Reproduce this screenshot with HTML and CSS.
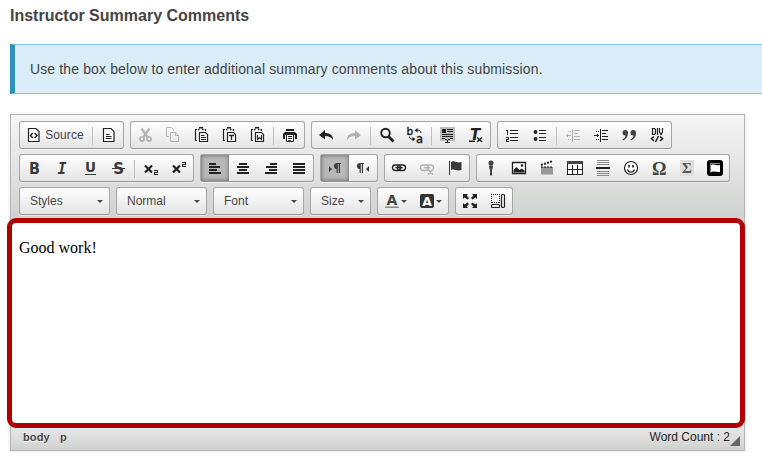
FILE: index.html
```html
<!DOCTYPE html>
<html lang="en">
<head>
<meta charset="utf-8">
<title>Instructor Summary Comments</title>
<link rel="stylesheet" href="styles.css">
</head>
<body>
<h1 class="title">Instructor Summary Comments</h1>
<p class="notice">Use the box below to enter additional summary comments about this submission.</p>
<div class="editor">
  <div class="toolbar">
    <div class="row">
      <div class="group">
        <span class="btn source"><svg class="line" viewBox="0 0 16 16"><path d="M2.500 1.500h7.500l3 3v10h-10.500z" fill="#fff" stroke-width="1.200"/><path d="M6.800 6 4.500 8.500l2.300 2.500M8.700 6 11 8.500 8.700 11" stroke-width="1.500"/></svg>Source</span>
        <i class="sep"></i>
        <span class="btn"><svg class="line" viewBox="0 0 16 16"><path d="M2.500 1.500h7.500l3 3v10h-10.500z" fill="#fff" stroke-width="1.200"/><path d="M5 7.500h3.500M5 9.500h5.500M5 11.500h5.500"/></svg></span>
      </div>
      <div class="group">
        <span class="btn off"><svg class="line" viewBox="0 0 16 16"><path d="M4.500 1.500 10.500 10M12.500 1.500 6.500 10" stroke-width="2.200"/><circle cx="5" cy="12" r="2" stroke-width="1.700"/><circle cx="12" cy="12" r="2" stroke-width="1.700"/></svg></span>
        <span class="btn off"><svg class="line" viewBox="0 0 16 16"><path d="M4 9.500H1.500v-9h5l2 2V4M5.500 5.500h5l3 3v6h-8zM10.500 5.500v3h3"/></svg></span>
        <span class="btn"><svg class="line" viewBox="0 0 16 16"><path d="M4 2.500H2.500v11H4M11.500 2.500h1V4" stroke-width="1.200"/><path d="M5 2.500h1.500M9 2.500h1.500M6 .8h4" stroke-width="1.500"/><path d="M6.500 5.500h6l2 2v7h-8z" fill="#fff" stroke-width="1.200"/><path d="M8 8.500h3.500M8 10.500h5M8 12.500h5"/></svg></span>
        <span class="btn"><svg class="line" viewBox="0 0 16 16"><path d="M4 2.500H2.500v11H4M11.500 2.500h1V4" stroke-width="1.200"/><path d="M5 2.500h1.500M9 2.500h1.500M6 .8h4" stroke-width="1.500"/><path d="M6.500 5.500h6l2 2v7h-8z" fill="#fff" stroke-width="1.200"/><path d="M8 8.500h5M10.500 8.500V13" stroke-width="1.300"/></svg></span>
        <span class="btn"><svg class="line" viewBox="0 0 16 16"><path d="M4 2.500H2.500v11H4M11.500 2.500h1V4" stroke-width="1.200"/><path d="M5 2.500h1.500M9 2.500h1.500M6 .8h4" stroke-width="1.500"/><path d="M6.500 5.500h6l2 2v7h-8z" fill="#fff" stroke-width="1.200"/><path d="M8.500 8v4.500l2-2 2 2V8" stroke-width="1.200"/></svg></span>
        <i class="sep"></i>
        <span class="btn"><svg viewBox="0 0 16 16"><path d="M4 2h8v2H4zM3 5h10l2 2v5h-2V8H3v4H1V7z"/><path d="M4.500 7.500h7v7h-7z" fill="#fff" stroke="#222"/><path d="M6 9h4v1H6zM6 11h4v1H6zM6 13h3v.8H6z"/></svg></span>
      </div>
      <div class="group">
        <span class="btn"><svg viewBox="0 0 16 16"><path d="M1 8l6-5v3c5 0 8 2 8 7-2-3-4-4-8-4v3.500z"/></svg></span>
        <span class="btn off"><svg viewBox="0 0 16 16"><path d="M15 8 9 3v3c-5 0-8 2-8 7 2-3 4-4 8-4v3.500z"/></svg></span>
        <i class="sep"></i>
        <span class="btn"><svg class="line" viewBox="0 0 16 16"><circle cx="6.500" cy="6" r="4.300" stroke-width="1.900"/><path d="M9.500 9.500l5 5" stroke-width="2.800"/></svg></span>
        <span class="btn"><svg viewBox="0 0 16 16"><text x="-.5" y="8" font-size="10.500" class="sans">b</text><text x="9" y="15.500" font-size="11.500" class="sans">a</text><path class="hair" d="M9 3.500c3-1 5 0 5 2.500M2.500 9.500c0 2.500 2 3 4 2.500"/><path d="M7.500 3.500l3-2.500v4.500zM8.500 12l-3-2v4.500z"/></svg></span>
        <i class="sep"></i>
        <span class="btn"><svg class="crisp" viewBox="0 0 16 16"><path fill="#bbb" d="M0 0h15v14H0z"/><path d="M2 2h4v4H2zM7 2h6v1H7zM7 4h6v1H7zM2 7h11v1H2zM2 9h11v1H2zM2 11h3v1H2zM10 11h3v1h-3zM5 12h2v1H5zM8 12h2v1H8zM7 13h1v2H7zM5 15h5v1H5z"/></svg></span>
        <span class="btn"><svg viewBox="0 0 16 16"><text x="2" y="13" font-size="15" font-style="italic">T</text><path d="M1 13.500h6V15H1z"/><path class="hair" d="M9 10.500l5 4.500M14 10.500l-5 4.500" stroke="#f5f5f5" stroke-width="4"/><path class="hair" d="M9 10.500l5 4.500M14 10.500l-5 4.500" stroke-width="1.500"/></svg></span>
      </div>
      <div class="group">
        <span class="btn"><svg class="crisp" viewBox="0 0 16 16"><path d="M2 3h2v5H3V4H2zM2 10h3v3H3v1h2v1H2v-3h2v-1H2zM6 3h8v1H6zM6 6h8v1H6zM6 10h8v1H6zM6 13h8v1H6z"/></svg></span>
        <span class="btn"><svg viewBox="0 0 16 16"><circle cx="3.500" cy="5" r="1.900"/><circle cx="3.500" cy="12" r="1.900"/><path d="M7 3h7v1H7zM7 6h7v1H7zM7 10h7v1H7zM7 13h7v1H7z"/></svg></span>
        <i class="sep"></i>
        <span class="btn off"><svg class="crisp" viewBox="0 0 16 16"><path d="M7 2h1v13H7zM9 3h6v1H9zM9 6h4v1H9zM9 9h6v1H9zM9 12h6v1H9zM3 4h1v1H3zM5 4h1v1H5zM3 12h1v1H3zM5 12h1v1H5zM1 8h5v1H1zM2 7h1v3H2z"/></svg></span>
        <span class="btn"><svg class="crisp" viewBox="0 0 16 16"><path d="M7 2h1v13H7zM9 3h6v1H9zM9 6h4v1H9zM9 9h6v1H9zM9 12h6v1H9zM3 4h1v1H3zM5 4h1v1H5zM3 12h1v1H3zM5 12h1v1H5zM1 8h5v1H1zM4 7h1v3H4z"/></svg></span>
        <span class="btn"><svg viewBox="0 0 16 16"><path d="M4 3a2.700 2.700 0 0 1 3 3c0 4-2 6-5 7.500l-.5-1C3.500 11 4.500 10 4.500 8.500A2.700 2.700 0 1 1 4 3zM12 3a2.700 2.700 0 0 1 3 3c0 4-2 6-5 7.500l-.5-1c2-1.500 3-2.500 3-4A2.700 2.700 0 1 1 12 3z" fill="#444"/></svg></span>
        <span class="btn"><svg class="line" viewBox="0 0 16 16"><path d="M3.500 1.500v6h2l1-1v-4l-1-1zM8.500 1v7M10.500 1v4l1.500 2.500L13.500 5V1" stroke-width="1.200"/><path d="M5 9.500l-2.500 2L5 14M11 9.500l2.500 2L11 14M9.500 9l-3 6" stroke-width="1.600"/></svg></span>
      </div>
    </div>
    <div class="row">
      <div class="group">
        <span class="btn"><svg class="soft" viewBox="0 0 16 16"><text x="3" y="13.500" font-size="15" textLength="11" lengthAdjust="spacingAndGlyphs">B</text></svg></span>
        <span class="btn"><svg class="soft" viewBox="0 0 16 16"><text x="3.500" y="13.500" font-size="15" font-style="italic" class="mono">I</text></svg></span>
        <span class="btn"><svg class="soft" viewBox="0 0 16 16"><text x="3" y="12" font-size="13.500">U</text><path d="M3 14h11v1H3z"/></svg></span>
        <span class="btn"><svg class="soft" viewBox="0 0 16 16"><text x="3.200" y="13.500" font-size="15">S</text><path d="M2 8h13v1H2z"/></svg></span>
        <i class="sep"></i>
        <span class="btn"><svg viewBox="0 0 16 16"><path class="hair" d="M2 5.500l7 7M9 5.500l-7 7" stroke-width="2.200"/><path d="M11 10h4v3h-3v1h3v1h-4v-3h3v-1h-3z"/></svg></span>
        <span class="btn"><svg viewBox="0 0 16 16"><path class="hair" d="M2 5.500l7 7M9 5.500l-7 7" stroke-width="2.200"/><path d="M11 2h4v3h-3v1h3v1h-4V4h3V3h-3z"/></svg></span>
      </div>
      <div class="group">
        <span class="btn on"><svg class="crisp" viewBox="0 0 16 16"><path d="M2 3h7v2H2zM2 6h11v2H2zM2 9h8v2H2zM2 12h12v2H2z"/></svg></span>
        <span class="btn"><svg class="crisp" viewBox="0 0 16 16"><path d="M4 3h8v2H4zM2 6h12v2H2zM4 9h8v2H4zM2 12h12v2H2z"/></svg></span>
        <span class="btn"><svg class="crisp" viewBox="0 0 16 16"><path d="M7 3h7v2H7zM3 6h11v2H3zM6 9h8v2H6zM2 12h12v2H2z"/></svg></span>
        <span class="btn"><svg class="crisp" viewBox="0 0 16 16"><path d="M2 3h12v2H2zM2 6h12v2H2zM2 9h12v2H2zM2 12h12v2H2z"/></svg></span>
      </div>
      <div class="group">
        <span class="btn on"><svg class="soft" viewBox="0 0 16 16"><path d="M2 6l3 3-3 3zM14 3v1h-1v9h-1.200V4h-1v9H9.600V9C6 9 6 3 10 3z"/></svg></span>
        <span class="btn"><svg class="soft" viewBox="0 0 16 16"><path d="M14 6l-3 3 3 3zM9 3v1H8v9H6.800V4h-1v9H4.600V9C1 9 1 3 5 3z"/></svg></span>
      </div>
      <div class="group">
        <span class="btn"><svg class="line" viewBox="0 0 16 16"><rect x="1.500" y="5" width="8" height="5.500" rx="2.700" stroke-width="1.300"/><rect x="6.500" y="5" width="8" height="5.500" rx="2.700" stroke-width="1.300"/><path d="M4.500 7.700h7" stroke-width="1.400"/></svg></span>
        <span class="btn off"><svg class="line" viewBox="0 0 16 16"><rect x="1.500" y="5" width="8" height="5.500" rx="2.700" stroke-width="1.400"/><path d="M8 5h4a2.500 2.500 0 0 1 2 4M5 7.700h6M9 9.500l5 5M14 9.500l-5 5" stroke-width="1.500"/></svg></span>
        <span class="btn"><svg class="soft" viewBox="0 0 16 16"><path d="M2 1h1v14H2zM4 2c3-2 5 1.500 10.500 0v8c-5 1.500-7-1.500-10.500 0z"/></svg></span>
      </div>
      <div class="group">
        <span class="btn"><svg viewBox="0 0 16 16"><circle cx="8" cy="3" r="2.500" fill="#444"/><path d="M6 5.500h4v1.500L9 10v5.500H7V10L6 7z" fill="#444"/></svg></span>
        <span class="btn"><svg viewBox="0 0 16 16"><path d="M1.500 2.500h13v11h-13z" fill="#fff" stroke="#222" stroke-width="1.300"/><path d="M2.500 12.500V10l3-3 3 3 2-1.500 3 2v2z"/><circle cx="11" cy="5.500" r="1.300"/></svg></span>
        <span class="btn"><svg viewBox="0 0 16 16"><path d="M2 7h12v7.500H2z" fill="#999"/><path d="M2 5l12-4" class="hair" stroke-width="2" stroke-dasharray="2 1.200"/><path d="M2 7.200h12" class="hair" stroke-width="1.200" stroke-dasharray="2 1"/></svg></span>
        <span class="btn"><svg class="crisp" viewBox="0 0 16 16"><path fill="#fff" d="M1 4h14v10H1z"/><path fill="#444" d="M0 1h16v3H0z"/><path d="M0 4h1v11H0zM15 4h1v11h-1zM5 5h1v9H5zM10 5h1v9h-1zM1 9h14v1H1zM0 14h16v1H0z"/></svg></span>
        <span class="btn"><svg class="crisp" viewBox="0 0 16 16"><path fill="#888" d="M2 0h12v1H2zM2 2h12v1H2zM2 4h12v1H2zM2 11h12v1H2zM2 13h12v1H2zM2 15h12v1H2z"/><path d="M1 7h14v2H1z"/></svg></span>
        <span class="btn"><svg class="line" viewBox="0 0 16 16"><circle cx="8" cy="8" r="6.500" stroke-width="1.200" fill="#fff"/><path d="M4.500 9.500c1 3.500 6 3.500 7 0" stroke-width="1.200"/><path d="M6 5v2.500M10 5v2.500" stroke-width="1.600"/></svg></span>
        <span class="btn"><svg viewBox="0 0 16 16"><text x="1" y="14.500" font-size="18" class="serif" fill="#444">Ω</text></svg></span>
        <span class="btn"><svg viewBox="0 0 16 16"><path d="M1 0h14v16H1z" fill="#ddd"/><text x="3" y="13" font-size="15" class="serif" fill="#555">Σ</text></svg></span>
        <span class="btn"><svg viewBox="0 0 16 16"><rect width="16" height="16" rx="3" fill="#000"/><path d="M3.500 12.500V3.500h9.500" stroke="#888" fill="none"/><path d="M4 5c3-1.500 4 1 9 0v7c-3 .5-6-1.500-9 0z" fill="#fff"/></svg></span>
      </div>
    </div>
    <div class="row">
      <div class="group combo">Styles<b class="arrow"></b></div>
      <div class="group combo">Normal<b class="arrow"></b></div>
      <div class="group combo">Font<b class="arrow"></b></div>
      <div class="group combo small">Size<b class="arrow"></b></div>
      <div class="group">
        <span class="btn color"><svg viewBox="0 0 16 16"><text x="2.500" y="12" font-size="14" fill="#444">A</text><path d="M1 13.500h14V15H1z" fill="#888"/></svg><b class="arrow"></b></span>
        <span class="btn color"><svg viewBox="0 0 16 16"><rect x="1" y="1" width="14" height="14" rx="2" fill="#333"/><text x="3.200" y="12.500" font-size="12.500" fill="#fff">A</text></svg><b class="arrow"></b></span>
      </div>
      <div class="group">
        <span class="btn"><svg viewBox="0 0 16 16"><path d="M1 1h5L4.600 2.500 7 5 5.500 6.500 2.500 4.600 1 6zM15 1v5l-1.500-1.400L10.500 6.500 9 5l2.400-2.500L10 1zM1 15v-5l1.500 1.400L5.500 9.500 7 11l-2.400 2.500L6 15zM15 15h-5l1.400-1.500L9 11l1.500-1.500 3 1.900L15 10z"/></svg></span>
        <span class="btn"><svg class="line" viewBox="0 0 16 16"><path d="M1.500 10V1.500H9.500V10M1.500 9.500H10" stroke-dasharray="1 1" class="crisp"/><rect x="11.500" y="1.500" width="3" height="13" rx="1" stroke-width="1.200"/><rect x="1.500" y="11.500" width="8" height="3" rx="1" stroke-width="1.200"/></svg></span>
      </div>
    </div>
  </div>
  <div class="content"><p>Good work!</p></div>
  <div class="status"><span class="path">body</span><span class="path">p</span><span class="count">Word Count : 2</span><i class="grip"></i></div>
  <div class="highlight"></div>
</div>
</body>
</html>
```
FILE: styles.css
```css
* { box-sizing: border-box; }
body {
  margin: 0;
  padding: 6px 0 0 10px;
  height: 459px;
  overflow: hidden;
  background: #fff;
  color: #444;
  font-family: "Liberation Sans", Arial, sans-serif;
}
.title { margin: 0; font-size: 16px; line-height: 20px; font-weight: bold; color: #444; }
.notice {
  margin: 18px 0 0;
  height: 50px;
  padding-left: 15px;
  border: solid #81c7e6;
  border-width: 1px 0;
  border-left: 5px solid #2b92c2;
  background: #daedf8;
  font-size: 14px;
  line-height: 49px;
  letter-spacing: .13px;
}
.editor {
  position: relative;
  width: 735px;
  height: 337px;
  margin-top: 20px;
  border: 1px solid #b6b6b6;
  display: flex;
  flex-direction: column;
  box-shadow: 0 0 3px rgba(0, 0, 0, .15);
}
.toolbar {
  height: 106px;
  padding: 6px 8px 0;
  background: linear-gradient(#f5f5f5, #cfd1cf);
}
.row { display: flex; gap: 6px; margin-bottom: 5px; }
.group {
  display: flex;
  height: 28px;
  border: 1px solid #a6a6a6;
  border-bottom-color: #979797;
  border-radius: 3px;
  background: linear-gradient(#fff, #e4e4e4);
  box-shadow: 0 1px 0 rgba(255, 255, 255, .5);
}
.btn { display: flex; align-items: center; justify-content: center; width: 28px; height: 26px; }
.btn.source { width: 70px; gap: 3px; font-size: 12px; letter-spacing: .1px; color: #474747; }
.btn.color { width: 35px; gap: 1px; }
.btn.off { opacity: .3; }
.btn.on { background: #b8b8b8; box-shadow: 0 0 4px rgba(0, 0, 0, .5) inset; }
.btn svg { width: 16px; height: 16px; flex: none; overflow: visible; fill: #222; font-family: "DejaVu Sans", sans-serif; font-weight: bold; }
.btn svg.line { fill: none; stroke: #222; }
.btn svg.soft { fill: #3a3a3a; }
.crisp { shape-rendering: crispEdges; }
.hair { fill: none; }
.hair:not([stroke]) { stroke: #222; }
.sans { font-family: "DejaVu Sans", sans-serif; font-weight: normal; stroke: #222; stroke-width: .4px; }
.mono { font-family: "DejaVu Sans Mono", monospace; }
.serif { font-family: "Liberation Serif", serif; }
.sep { width: 1px; height: 18px; margin: 5px 2px 0; background: #c0c0c0; }
.combo {
  width: 91px;
  align-items: center;
  justify-content: space-between;
  padding: 0 6px 0 10px;
  font-size: 12px;
  color: #474747;
}
.combo.small { width: 61px; }
.arrow { border: 3px solid transparent; border-top-color: #474747; border-bottom: 0; margin-top: 1px; }
.content { flex: 1; padding: 18px 8px; background: #fff; }
.content p { margin: 0; color: #000; font: 16px/18px "Liberation Serif", "Times New Roman", serif; }
.status {
  display: flex;
  height: 26px;
  padding: 6px 4px 0 12px;
  background: linear-gradient(#ebebeb, #cfd1cf);
  font-size: 11px;
  line-height: 15px;
}
.path { font-weight: bold; margin-right: 10px; letter-spacing: .15px; text-shadow: 0 1px 0 #fff; }
.count { margin-left: auto; font-size: 12px; color: #222; }
.grip { width: 0; height: 0; margin-top: 6px; border-left: 10px solid transparent; border-bottom: 10px solid #666; }
.highlight {
  position: absolute;
  left: -4px;
  top: 103px;
  width: 738px;
  height: 210px;
  border: 5px solid #b00000;
  border-radius: 9px;
}
```
